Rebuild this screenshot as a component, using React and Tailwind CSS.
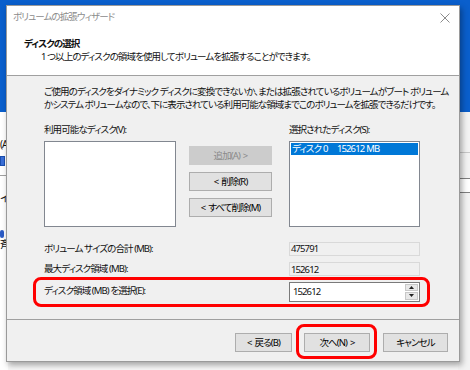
import React from "react";

function Btn({ children, disabled, className = "" }) {
  return (
    <div
      className={
        "flex items-center justify-center h-[19px] border leading-none whitespace-pre " +
        (disabled
          ? "bg-[#cccccc] border-[#cccccc] text-[#8a8a8a] "
          : "bg-[#e1e1e1] border-[#adadad] text-black ") +
        className
      }
    >
      {children}
    </div>
  );
}

function Field({ value }) {
  return (
    <div className="w-[131px] h-[14px] border border-[#d9d9d9] bg-[#f0f0f0] flex items-center pl-[1px] leading-none">
      {value}
    </div>
  );
}

export default function App() {
  return (
    <div className="relative w-[470px] h-[370px] overflow-hidden bg-[#f7f7f7] font-['Noto_Sans','Noto_Sans_CJK_JP',sans-serif] [font-feature-settings:'palt'] text-[9.5px] tracking-[-0.9px] whitespace-nowrap text-[#111]">
      {/* desktop background */}
      <div className="absolute left-0 top-0 w-[470px] h-[112px] bg-[#0a5fcc]" />
      {/* left background window fragment */}
      <div className="absolute left-0 top-[112px] w-[8px] h-[258px] bg-white flex flex-col pt-[26px] text-[10px]">
        <div className="leading-[12px]">(A</div>
        <div className="mt-[6px] w-[5px] h-[10px] bg-[#3a6fd8] border border-[#1b4fb0]" />
        <div className="mt-[9px] w-[8px] h-[1px] bg-[#a0a0a0]" />
        <div className="mt-[16px] leading-[12px]">イ</div>
        <div className="mt-[26px] w-[4px] h-[8px] rounded-full bg-[#2c5cc5]" />
        <div className="leading-[12px]">斉</div>
      </div>
      {/* right background window fragment */}
      <div className="absolute right-0 top-[112px] w-[12px] h-[258px] bg-[#f3f3f3] flex flex-col pt-[40px]">
        <div className="w-[12px] h-[1px] bg-[#c8c8c8]" />
        <div className="mt-[25px] ml-[1px] w-[12px] h-[15px] border border-[#808080] bg-white" />
      </div>

      {/* dialog */}
      <div className="absolute left-[6px] top-[5px] w-[454px] h-[357px] flex flex-col border border-[#9a9a9a] bg-[#f0f0f0] shadow-[2px_3px_6px_rgba(0,0,0,0.35)]">
        {/* title + header (white) */}
        <div className="bg-white flex flex-col">
          <div className="h-[23px] flex items-center justify-between pl-[6px] pr-[8px]">
            <span className="text-[#8c8c8c]">ボリュームの拡張ウィザード</span>
            <svg width="10" height="10" viewBox="0 0 10 10" className="mr-[1px]">
              <path d="M0.5 0.5 L9.5 9.5 M9.5 0.5 L0.5 9.5" stroke="#8c8c8c" strokeWidth="1" />
            </svg>
          </div>
          <div className="h-[46px] pt-[8px] pl-[17px] flex flex-col">
            <div className="leading-[13px] font-bold">ディスクの選択</div>
            <div className="leading-[13px] pl-[17px]">
              1 つ以上のディスクの領域を使用してボリュームを拡張することができます。
            </div>
          </div>
        </div>
        <div className="h-[1px] bg-[#a0a0a0]" />

        {/* body */}
        <div className="flex-1 flex flex-col pl-[37px] pt-[9px]">
          <div className="leading-[13px]">
            <div>ご使用のディスクをダイナミック ディスクに変換できないか、または拡張されているボリュームがブート ボリューム</div>
            <div className="tracking-[-0.95px]">かシステム ボリュームなので、下に表示されている利用可能な領域までこのボリュームを拡張できるだけです。</div>
          </div>

          <div className="mt-[13px] flex">
            <div className="w-[132px] flex flex-col">
              <div className="leading-[12px]">利用可能なディスク(V):</div>
              <div className="mt-[5px] h-[86px] border border-[#828790] bg-white" />
            </div>
            <div className="ml-[13px] w-[83px] flex flex-col gap-[7px] pt-[22px]">
              <Btn disabled>追加(A)<span className="ml-[3px]">&gt;</span></Btn>
              <Btn>&lt;<span className="ml-[3px]">削除(R)</span></Btn>
              <Btn>&lt;<span className="ml-[3px]">すべて削除(M)</span></Btn>
            </div>
            <div className="ml-[17px] w-[131px] flex flex-col">
              <div className="leading-[12px]">選択されたディスク(S):</div>
              <div className="mt-[5px] h-[86px] border border-[#828790] bg-white p-[1px]">
                <div className="h-[12px] bg-[#0078d7] text-white flex items-center leading-none pl-[1px]">
                  <span className="w-[45px] shrink-0">ディスク<span className="ml-[2px]">0</span></span>
                  <span>152612<span className="ml-[2px]">MB</span></span>
                </div>
              </div>
            </div>
          </div>

          <div className="mt-[15px] flex items-center">
            <div className="w-[245px]">ボリューム サイズの合計 (MB):</div>
            <Field value="475791" />
          </div>
          <div className="mt-[6px] flex items-center">
            <div className="w-[245px]">最大ディスク領域 (MB):</div>
            <Field value="152612" />
          </div>
          <div className="mt-[5px] flex items-center">
            <div className="w-[245px]">ディスク領域 (MB) を選択(E):</div>
            <div className="w-[131px] h-[20px] border border-[#7a7a7a] bg-white flex items-center justify-between pl-[3px] pr-[1px] leading-none">
              <span>152612</span>
              <div className="w-[13px] h-[16px] flex flex-col gap-[1px]">
                <div className="flex-1 bg-[#e8e8e8] border border-[#c8c8c8] flex items-center justify-center">
                  <svg width="5" height="3" viewBox="0 0 5 3"><path d="M0 3 L2.5 0 L5 3 Z" fill="#222" /></svg>
                </div>
                <div className="flex-1 bg-[#e8e8e8] border border-[#c8c8c8] flex items-center justify-center">
                  <svg width="5" height="3" viewBox="0 0 5 3"><path d="M0 0 L5 0 L2.5 3 Z" fill="#222" /></svg>
                </div>
              </div>
            </div>
          </div>
        </div>

        <div className="h-[1px] bg-[#a0a0a0]" />
        {/* footer */}
        <div className="h-[41px] flex justify-end items-start pt-[13px] pr-[11px]">
          <Btn className="w-[57px]">&lt;<span className="ml-[3px]">戻る(B)</span></Btn>
          <Btn className="w-[66px] ml-[12px]">次へ(N)<span className="ml-[3px]">&gt;</span></Btn>
          <Btn className="w-[65px] ml-[13px]">キャンセル</Btn>
        </div>
      </div>

      {/* red annotation highlights */}
      <div className="absolute left-[33px] top-[277px] w-[397px] h-[30px] border-[3px] border-[#ff0000] rounded-[8px]" />
      <div className="absolute left-[296px] top-[324px] w-[81px] h-[35px] border-[3px] border-[#ff0000] rounded-[8px]" />
    </div>
  );
}
